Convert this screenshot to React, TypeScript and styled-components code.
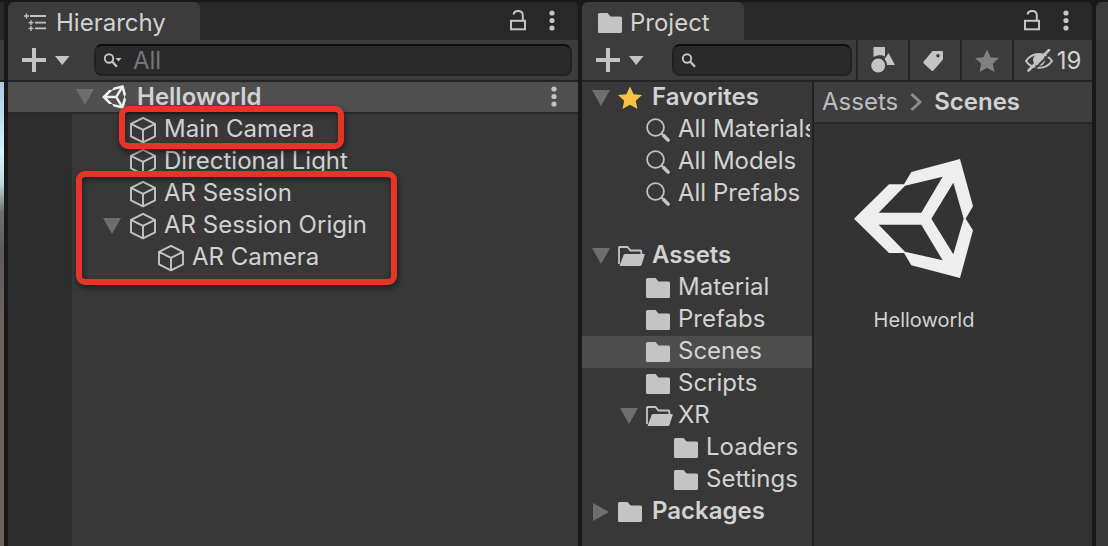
import React from "react";
import styled, { createGlobalStyle } from "styled-components";

const GlobalStyle = createGlobalStyle`
  * { box-sizing: border-box; }
  body {
    margin: 0;
    background: #191919;
    color: #d2d2d2;
    font-family: Inter, "Liberation Sans", sans-serif;
    font-size: 24px;
    line-height: 30px;
  }
  button, input { font: inherit; color: inherit; }
  ul { margin: 0; padding: 0; list-style: none; }
`;

/* ---------- Layout ---------- */

const Editor = styled.main`
  display: flex;
  gap: 4px;
  min-height: 100vh;
  padding-top: 2px;
  overflow: hidden;
`;

const SceneEdge = styled.div`
  flex: 0 0 4px;
  background: linear-gradient(
    #282828 0 38px, #3c3c3c 38px 78px, #212121 78px 80px,
    #abcbe8 80px, #d2f4fc 150px, #c4dde2 180px, #726f70 210px, #5f5a59 250px, #6b645f 320px, #6b645f
  );
`;

const InspectorEdge = styled.div`
  flex: 0 0 12px;
  border-radius: 6px 0 0 0;
  background: linear-gradient(#3c3c3c 0 38px, #383838 38px);
`;

const Panel = styled.section<{ $grow: number }>`
  display: flex;
  flex-direction: column;
  flex: ${(p) => p.$grow} 1 0;
  min-width: 0;
  border-radius: 6px 6px 0 0;
  overflow: hidden;
  background: #383838;
`;

const TabBar = styled.header`
  display: flex;
  align-items: center;
  gap: 14px;
  height: 38px;
  padding-right: 16px;
  background: #282828;
`;

const Tab = styled.button<{ $width: number }>`
  display: flex;
  align-items: center;
  gap: 8px;
  width: ${(p) => p.$width}px;
  height: 38px;
  margin-right: auto;
  padding: 4px 0 0 16px;
  border: 0;
  border-radius: 6px 6px 0 0;
  background: #3c3c3c;
`;

const IconButton = styled.button<{ $width?: number }>`
  display: flex;
  flex: none;
  align-items: center;
  justify-content: center;
  width: ${(p) => p.$width ?? 20}px;
  height: 24px;
  padding: 0;
  border: 0;
  background: none;
`;

const Toolbar = styled.div`
  display: flex;
  align-items: center;
  height: 42px;
  padding-left: 14px;
  border-bottom: 2px solid #232323;
  background: #3c3c3c;
`;

const SearchBox = styled.label<{ $left: number; $right: number }>`
  display: flex;
  flex: 1;
  align-items: center;
  gap: 10px;
  min-width: 0;
  height: 32px;
  margin: 0 ${(p) => p.$right}px 0 ${(p) => p.$left}px;
  padding-left: 7px;
  border: 2px solid #212121;
  border-top-color: #0d0d0d;
  border-radius: 8px;
  background: #2a2a2a;
`;

const SearchInput = styled.input`
  flex: 1;
  min-width: 0;
  height: 28px;
  padding: 2px 0 0;
  border: 0;
  outline: 0;
  background: none;
  &::placeholder { color: #767676; opacity: 1; }
`;

const ToolButton = styled.button<{ $wide?: boolean }>`
  display: flex;
  flex: none;
  align-items: center;
  justify-content: center;
  gap: 4px;
  width: ${(p) => (p.$wide ? 80 : 52)}px;
  height: 40px;
  padding: 1px 0 0;
  border: 0;
  border-left: 2px solid #232323;
  background: none;
`;

/* ---------- Trees ---------- */

const Row = styled.li<{ $level: number; $selected?: boolean }>`
  display: flex;
  align-items: center;
  height: 32px;
  padding-left: ${(p) => 10 + p.$level * 28}px;
  background: ${(p) => (p.$selected ? "#4d4d4d" : "transparent")};
`;

const Slot = styled.span`
  display: flex;
  flex: none;
  align-items: center;
  width: 28px;
  height: 28px;
`;

const Label = styled.span<{ $bold?: boolean }>`
  align-self: flex-start;
  flex: 1;
  min-width: 0;
  margin: 0 2px 0 ${(p) => (p.$bold ? 6 : 4)}px;
  overflow: hidden;
  white-space: nowrap;
  font-weight: ${(p) => (p.$bold ? 600 : 400)};
`;

const ObjectLabel = styled(Label)`
  margin-left: 7px;
`;

const SceneHeader = styled.div`
  display: flex;
  align-items: center;
  height: 32px;
  padding: 0 14px 0 68px;
  border-bottom: 2px solid #2a2a2a;
  background: #4f4f4f;
`;

const HierarchyBody = styled.div`
  position: relative;
  display: flex;
  flex: 1;
`;

const Gutter = styled.div`
  flex: 0 0 64px;
  background: #2d2d2d;
`;

const HierarchyTree = styled.ul`
  flex: 1;
  min-width: 0;
`;

const HierarchyRow = styled(Row)`
  padding-left: ${(p) => 3 + p.$level * 28}px;
`;

const Highlight = styled.div<{ $x: number; $y: number; $w: number; $h: number }>`
  position: absolute;
  left: ${(p) => p.$x}px;
  top: ${(p) => p.$y}px;
  width: ${(p) => p.$w}px;
  height: ${(p) => p.$h}px;
  border: 6px solid #e53527;
  border-radius: 9px;
  box-shadow: 1px 3px 6px rgba(0, 0, 0, 0.5), inset 1px 3px 6px rgba(0, 0, 0, 0.4);
  pointer-events: none;
`;

const ProjectBody = styled.div`
  display: flex;
  flex: 1;
`;

const ProjectTree = styled.nav`
  flex: 0 0 232px;
  min-width: 0;
  border-right: 2px solid #212121;
`;

const TreeGroup = styled.ul`
  & + & { margin-top: 30px; }
`;

const Content = styled.div`
  flex: 1;
  min-width: 0;
  background: #333333;
`;

const Breadcrumbs = styled.nav`
  display: flex;
  align-items: center;
  gap: 11px;
  height: 42px;
  padding-left: 8px;
  border-bottom: 2px solid #282828;
  background: #3e3e3e;
`;

const Crumb = styled.a<{ $current?: boolean }>`
  color: ${(p) => (p.$current ? "#d2d2d2" : "#bdbdbd")};
  font-weight: ${(p) => (p.$current ? 600 : 400)};
  text-decoration: none;
`;

const AssetGrid = styled.div`
  display: flex;
  flex-wrap: wrap;
  padding: 35px 40px;
`;

const Asset = styled.figure`
  display: flex;
  flex-direction: column;
  gap: 27px;
  width: 140px;
  margin: 0;
`;

const AssetName = styled.figcaption`
  font-size: 20px;
  text-align: center;
`;

/* ---------- Icons ---------- */

const ICON = "#c4c4c4";

const UnityLogo = ({ size, color }: { size: number; color: string }) => (
  <svg width={size} height={size} viewBox="73 57 357 357" fill={color} fillRule="evenodd">
    <path d="M73 236 178 133H223L245 96 391 57 430 199 408 236 430 271 391 414 245 376 223 339H178ZM147 218H275L339 110 226 137ZM147 254 226 335 339 361 275 254ZM305 236 371 343 402 236 371 128Z" />
  </svg>
);

const Cube = () => (
  <svg width="28" height="28" viewBox="0 0 28 28" fill="none" stroke={ICON} strokeWidth="1.9" strokeLinejoin="round">
    <path d="M14 1.8 26 7.8V20.4L14 26.4 2 20.4V7.8ZM2 7.8 14 13.8 26 7.8M14 13.8V26.4" />
  </svg>
);

const Folder = () => (
  <svg width="24" height="20" viewBox="0 0 24 20" fill={ICON}>
    <path d="M1.5 0H9.5L12.5 3.5H22.5Q24 3.5 24 5V18.5Q24 20 22.5 20H1.5Q0 20 0 18.5V1.5Q0 0 1.5 0Z" />
  </svg>
);

const FolderOpen = () => (
  <svg width="28" height="20" viewBox="0 0 28 20">
    <path d="M1 18V1.5Q1 1 1.5 1H9.5L12.5 4.5H22.5Q23.3 4.5 23.3 5.5V8" fill="none" stroke={ICON} strokeWidth="1.8" />
    <path d="M7.5 8H26Q27 8 26.700 9L23.5 19Q23 20 22 20H1.5L5.5 9.2Q6 8 7.5 8Z" fill={ICON} />
  </svg>
);

const Triangle = ({ closed }: { closed?: boolean }) => (
  <svg width="18" height="18" viewBox="0 0 18 18" fill="#6e6e6e">
    <path d={closed ? "M1 0 17 9 1 18Z" : "M0 1H18L9 17Z"} />
  </svg>
);

const Magnifier = () => (
  <svg width="24" height="24" viewBox="0 0 24 24" fill="none" stroke={ICON}>
    <circle cx="9.5" cy="9.5" r="8.4" strokeWidth="1.8" />
    <path d="M15.5 15.5 17.5 17.5" strokeWidth="1.8" />
    <path d="M18 18 22 22" strokeWidth="3.6" strokeLinecap="round" />
  </svg>
);

const Star = ({ color }: { color: string }) => (
  <svg width="24" height="24" viewBox="0 0 24 23" fill={color}>
    <path d="M12 0 15.6 7.7 24 8.5 17.8 14.2 19.5 22.5 12 18.3 4.5 22.5 6.2 14.2 0 8.5 8.4 7.7Z" />
  </svg>
);

const HierarchyIcon = () => (
  <svg width="24" height="20" viewBox="0 0 24 20" fill="none" stroke={ICON}>
    <path d="M6 3H22M11 9.6H22M11 15.4H22" strokeWidth="1.8" />
    <path d="M0 3H5M2.5 .5V5.5M4.5 9.6H9.5M7 7.2V12M4.5 15.4H9.5M7 13V18" strokeWidth="1.4" />
  </svg>
);

const Unlock = () => (
  <svg width="16" height="22" viewBox="0 0 16 22" fill="none" stroke={ICON} strokeWidth="2">
    <rect x="1" y="10.8" width="14" height="8.5" />
    <path d="M3.5 4.5C4.5 -.4 12.8 -.4 12.8 5.5V10.5" />
  </svg>
);

const Dots = () => (
  <svg width="6" height="22" viewBox="0 0 6 22" fill={ICON}>
    <circle cx="3" cy="3" r="2.6" />
    <circle cx="3" cy="10.5" r="2.6" />
    <circle cx="3" cy="18" r="2.6" />
  </svg>
);

const AddIcon = () => (
  <svg width="48" height="24" viewBox="0 0 48 24" fill={ICON}>
    <path d="M10 0H14V10H24V14H14V24H10V14H0V10H10ZM33 8H47.5L40.2 17Z" />
  </svg>
);

const SearchGlyph = ({ menu }: { menu?: boolean }) => (
  <svg width={menu ? 20 : 16} height="16" viewBox={menu ? "0 0 20 16" : "0 0 16 16"}>
    <circle cx="6" cy="6.500" r="4.2" fill="none" stroke={ICON} strokeWidth="1.9" />
    <path d="M9 9.500 14 14.800" stroke={ICON} strokeWidth="2.4" />
    {menu && <path d="M12.5 6H18.500L15.5 9.500Z" fill={ICON} />}
  </svg>
);

const Shapes = () => (
  <svg width="24" height="28" viewBox="0 0 24 28" fill={ICON}>
    <path d="M2.5 0H14V9.5C11 7.6 6 7.6 2.5 10Z" />
    <path d="M17.500 6 24 18H16C15.8 15.500 15 13.500 13.5 12.2Z" />
    <circle cx="7.2" cy="18.600" r="7" />
  </svg>
);

const Tag = () => (
  <svg width="24" height="20" viewBox="0 0 24 20" fill={ICON} fillRule="evenodd">
    <path d="M9.5 0H19Q20 0 20 1V8.5L10 20Q9.3 20.3 8.7 19.7L.5 12.2Q0 11.5 .5 10.8ZM15 3A1.7 1.7 0 1 0 15 6.4 1.7 1.7 0 1 0 15 3Z" />
  </svg>
);

const HiddenEye = () => (
  <svg width="28" height="24" viewBox="0 0 28 24" fill="none" stroke={ICON}>
    <path d="M1 12C7 2.500 21 2.500 27 12C21 21 7 21 1 12Z" strokeWidth="2" />
    <circle cx="14" cy="11" r="6" fill={ICON} stroke="none" />
    <path d="M6 24 27 2.5" stroke="#3c3c3c" strokeWidth="2" />
    <path d="M3.5 21.500 24 1" strokeWidth="2.6" strokeLinecap="round" />
  </svg>
);

const Chevron = () => (
  <svg width="14" height="20" viewBox="0 0 14 20" fill="none" stroke="#8c8c8c" strokeWidth="3">
    <path d="M2.5 2 11 10 2.5 18" />
  </svg>
);

/* ---------- Data ---------- */

type Kind = "star" | "search" | "folder" | "open";
interface Node { name: string; level: number; kind: Kind; toggle?: "open" | "closed"; selected?: boolean }

const favorites: Node[] = [
  { name: "Favorites", level: 0, kind: "star", toggle: "open" },
  { name: "All Materials", level: 1, kind: "search" },
  { name: "All Models", level: 1, kind: "search" },
  { name: "All Prefabs", level: 1, kind: "search" },
];

const folders: Node[] = [
  { name: "Assets", level: 0, kind: "open", toggle: "open" },
  { name: "Material", level: 1, kind: "folder" },
  { name: "Prefabs", level: 1, kind: "folder" },
  { name: "Scenes", level: 1, kind: "folder", selected: true },
  { name: "Scripts", level: 1, kind: "folder" },
  { name: "XR", level: 1, kind: "open", toggle: "open" },
  { name: "Loaders", level: 2, kind: "folder" },
  { name: "Settings", level: 2, kind: "folder" },
  { name: "Packages", level: 0, kind: "folder", toggle: "closed" },
];

const objects = [
  { name: "Main Camera", level: 1 },
  { name: "Directional Light", level: 1 },
  { name: "AR Session", level: 1 },
  { name: "AR Session Origin", level: 1, open: true },
  { name: "AR Camera", level: 2 },
];

const Spacer = styled.span`
  flex: 0 0 26px;
`;

const ToggleButton = styled(IconButton)`
  width: 26px;
  justify-content: flex-start;
`;

const Toggle = ({ name, closed }: { name: string; closed?: boolean }) => (
  <ToggleButton aria-label={`Toggle ${name}`} aria-expanded={!closed}>
    <Triangle closed={closed} />
  </ToggleButton>
);

const kindIcon: Record<Kind, React.ReactNode> = {
  star: <Star color="#f5c344" />,
  search: <Magnifier />,
  folder: <Folder />,
  open: <FolderOpen />,
};

const renderNode = (n: Node) => (
  <Row key={n.name} $level={n.level} $selected={n.selected}>
    {n.toggle ? <Toggle name={n.name} closed={n.toggle === "closed"} /> : <Spacer />}
    <Slot>{kindIcon[n.kind]}</Slot>
    <Label $bold={n.level === 0}>{n.name}</Label>
  </Row>
);

const WindowControls = () => (
  <>
    <IconButton aria-label="Lock panel"><Unlock /></IconButton>
    <IconButton aria-label="Panel menu"><Dots /></IconButton>
  </>
);

export default function App() {
  return (
    <>
      <GlobalStyle />
      <Editor>
        <SceneEdge />

        <Panel $grow={570}>
          <TabBar>
            <Tab $width={192}><HierarchyIcon />Hierarchy</Tab>
            <WindowControls />
          </TabBar>
          <Toolbar>
            <IconButton $width={48} aria-label="Create object"><AddIcon /></IconButton>
            <SearchBox $left={24} $right={6}>
              <SearchGlyph menu />
              <SearchInput type="text" placeholder="All" aria-label="Search hierarchy" />
            </SearchBox>
          </Toolbar>
          <SceneHeader>
            <Toggle name="Helloworld" />
            <Slot><UnityLogo size={24} color="#f0f0f0" /></Slot>
            <ObjectLabel $bold>Helloworld</ObjectLabel>
            <IconButton aria-label="Scene menu"><Dots /></IconButton>
          </SceneHeader>
          <HierarchyBody>
            <Gutter />
            <HierarchyTree>
              {objects.map((o) => (
                <HierarchyRow key={o.name} $level={o.level}>
                  {o.open ? <Toggle name={o.name} /> : <Spacer />}
                  <Slot><Cube /></Slot>
                  <ObjectLabel>{o.name}</ObjectLabel>
                </HierarchyRow>
              ))}
            </HierarchyTree>
            <Highlight $x={111} $y={-8} $w={225} $h={43} />
            <Highlight $x={68} $y={57} $w={321} $h={114} />
          </HierarchyBody>
        </Panel>

        <Panel $grow={510}>
          <TabBar>
            <Tab $width={162}><Folder />Project</Tab>
            <WindowControls />
          </TabBar>
          <Toolbar>
            <IconButton $width={48} aria-label="Create asset"><AddIcon /></IconButton>
            <SearchBox $left={28} $right={4}>
              <SearchGlyph />
              <SearchInput type="text" aria-label="Search project" />
            </SearchBox>
            <ToolButton aria-label="Search by type"><Shapes /></ToolButton>
            <ToolButton aria-label="Search by label"><Tag /></ToolButton>
            <ToolButton aria-label="Save search"><Star color="#808080" /></ToolButton>
            <ToolButton $wide aria-label="Hidden packages: 19"><HiddenEye />19</ToolButton>
          </Toolbar>
          <ProjectBody>
            <ProjectTree aria-label="Project folders">
              <TreeGroup>{favorites.map(renderNode)}</TreeGroup>
              <TreeGroup>{folders.map(renderNode)}</TreeGroup>
            </ProjectTree>
            <Content>
              <Breadcrumbs aria-label="Breadcrumb">
                <Crumb href="#assets">Assets</Crumb>
                <Chevron />
                <Crumb href="#scenes" $current>Scenes</Crumb>
              </Breadcrumbs>
              <AssetGrid>
                <Asset>
                  <UnityLogo size={119} color="#eeeeee" />
                  <AssetName>Helloworld</AssetName>
                </Asset>
              </AssetGrid>
            </Content>
          </ProjectBody>
        </Panel>

        <InspectorEdge />
      </Editor>
    </>
  );
}
